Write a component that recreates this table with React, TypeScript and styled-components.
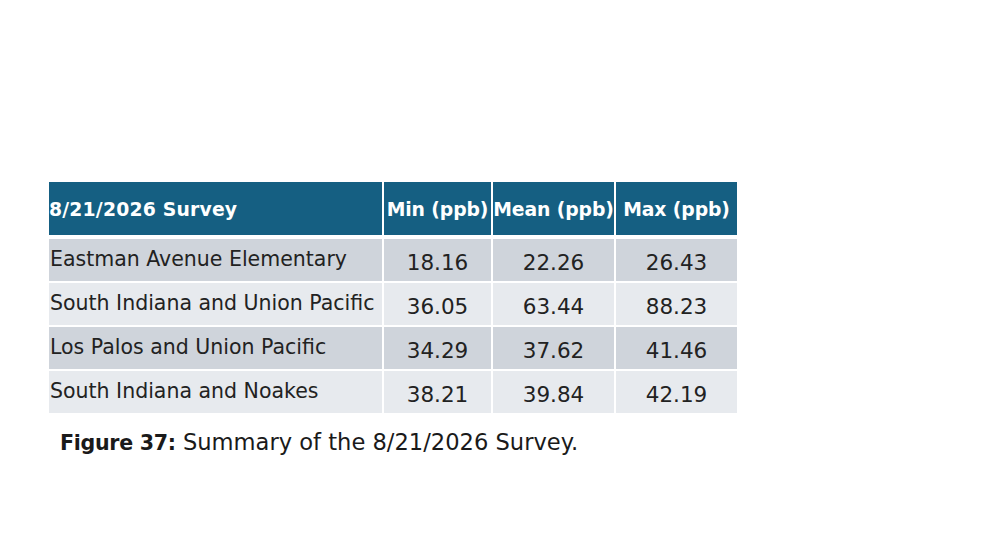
import React from 'react'
import styled, { createGlobalStyle } from 'styled-components'

const GlobalStyle = createGlobalStyle`
  html, body {
    margin: 0;
    padding: 0;
    background: #ffffff;
  }
  body {
    font-family: "DejaVu Sans", "Liberation Sans", sans-serif;
    color: #1a1a1a;
  }
`

const Page = styled.div`
  width: 1000px;
  height: 556px;
  box-sizing: border-box;
  padding: 182px 0 0 49px;
  background: #ffffff;
`

const Table = styled.div`
  display: grid;
  grid-template-columns: 333px 107px 121px 121px;
  column-gap: 2px;
  width: 688px;
`

const HeadCell = styled.div<{ $first?: boolean }>`
  height: 53px;
  margin-bottom: 4px;
  background: #155f82;
  color: #ffffff;
  font-weight: 700;
  font-size: 18.8px;
  letter-spacing: ${({ $first }) => ($first ? '0.2px' : '-0.1px')};
  display: flex;
  align-items: center;
  justify-content: ${({ $first }) => ($first ? 'flex-start' : 'center')};
  padding-top: 2px;
  box-sizing: border-box;
  white-space: nowrap;
`

const Cell = styled.div<{ $dark: boolean; $num?: boolean }>`
  height: 42px;
  margin-bottom: 2px;
  background: ${({ $dark }) => ($dark ? '#cfd4db' : '#e7eaee')};
  display: flex;
  align-items: center;
  justify-content: ${({ $num }) => ($num ? 'center' : 'flex-start')};
  padding: ${({ $num }) => ($num ? '5px 0 0 0' : '0 0 2px 1px')};
  box-sizing: border-box;
  font-size: ${({ $num }) => ($num ? '21.5px' : '20.5px')};
  color: #222222;
  white-space: nowrap;
`

const Caption = styled.p`
  margin: 14px 0 0 11px;
  font-size: 22.6px;
  color: #1a1a1a;

  b {
    font-size: 20.6px;
    font-weight: 700;
    letter-spacing: -0.3px;
  }
`

const rows = [
  ['Eastman Avenue Elementary', '18.16', '22.26', '26.43'],
  ['South Indiana and Union Pacific', '36.05', '63.44', '88.23'],
  ['Los Palos and Union Pacific', '34.29', '37.62', '41.46'],
  ['South Indiana and Noakes', '38.21', '39.84', '42.19'],
]

export default function App() {
  return (
    <>
      <GlobalStyle />
      <Page>
        <Table>
          <HeadCell $first>8/21/2026 Survey</HeadCell>
          <HeadCell>Min (ppb)</HeadCell>
          <HeadCell>Mean (ppb)</HeadCell>
          <HeadCell>Max (ppb)</HeadCell>
          {rows.map((r, i) =>
            r.map((v, j) => (
              <Cell key={i + '-' + j} $dark={i % 2 === 0} $num={j > 0}>
                {v}
              </Cell>
            ))
          )}
        </Table>
        <Caption>
          <b>Figure 37:</b> Summary of the 8/21/2026 Survey.
        </Caption>
      </Page>
    </>
  )
}
